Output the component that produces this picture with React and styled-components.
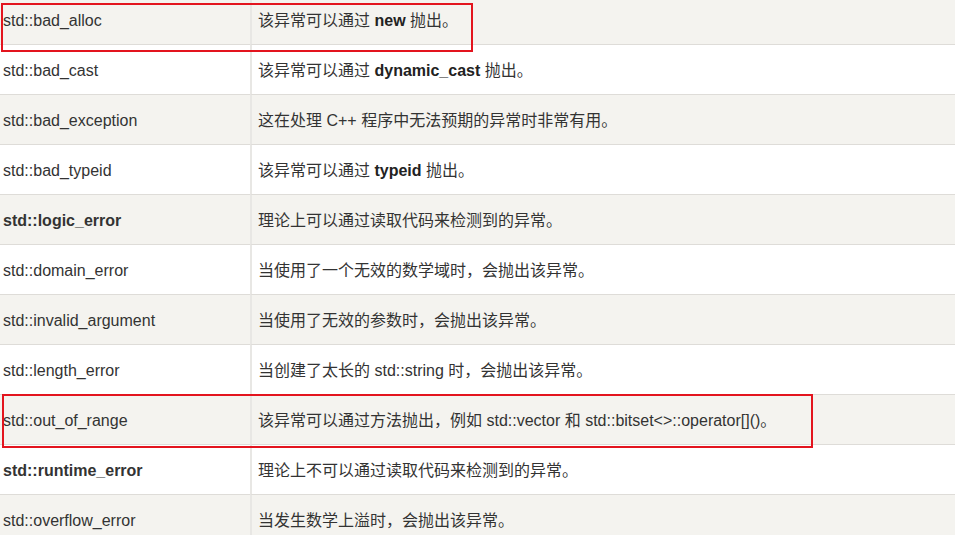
import React from "react";
import styled, { createGlobalStyle } from "styled-components";

const Global = createGlobalStyle`
  html, body { margin: 0; padding: 0; background: #ffffff; overflow: hidden; }
  body { font-family: "Liberation Sans", Arial, "Noto Sans CJK SC", sans-serif; }
`;

const Page = styled.div`
  position: relative;
  width: 955px;
  height: 535px;
  overflow: hidden;
`;

const Table = styled.div`
  display: grid;
  grid-template-columns: 250px 1fr;
  margin-top: -5px;
  width: 980px;
`;

const Cell = styled.div`
  height: 50px;
  display: flex;
  align-items: center;
  box-sizing: border-box;
  padding-top: 2px;
  border-bottom: 1px solid #dedcd8;
  background: ${(p) => (p.$shade ? "#f4f3ef" : "#ffffff")};
  color: #333333;
  font-size: 16px;
  line-height: 20px;
  font-weight: ${(p) => (p.$bold ? 700 : 400)};
  padding-left: ${(p) => (p.$desc ? "6px" : "3px")};
  border-left: ${(p) => (p.$desc ? "2px solid #e8e7e4" : "none")};
  white-space: pre;
  font-family: "Liberation Sans", Arial, "Noto Sans CJK SC", sans-serif;
`;

const Text = styled.span`
  white-space: pre;
  line-height: 20px;
`;

const Strong = styled.b`
  font-weight: 700;
  color: #222;
`;

const Highlight = styled.div`
  position: absolute;
  border: 2px solid #e3141e;
  left: ${(p) => p.$x}px;
  top: ${(p) => p.$y}px;
  width: ${(p) => p.$w}px;
  height: ${(p) => p.$h}px;
  box-sizing: border-box;
  pointer-events: none;
`;

const rows = [
  { name: "std::bad_alloc", desc: <>该异常可以通过 <Strong>new</Strong> 抛出。</> },
  { name: "std::bad_cast", desc: <>该异常可以通过 <Strong>dynamic_cast</Strong> 抛出。</> },
  { name: "std::bad_exception", desc: "这在处理 C++ 程序中无法预期的异常时非常有用。" },
  { name: "std::bad_typeid", desc: <>该异常可以通过 <Strong>typeid</Strong> 抛出。</> },
  { name: "std::logic_error", bold: true, desc: "理论上可以通过读取代码来检测到的异常。" },
  { name: "std::domain_error", desc: "当使用了一个无效的数学域时，会抛出该异常。" },
  { name: "std::invalid_argument", desc: "当使用了无效的参数时，会抛出该异常。" },
  { name: "std::length_error", desc: "当创建了太长的 std::string 时，会抛出该异常。" },
  { name: "std::out_of_range", desc: "该异常可以通过方法抛出，例如 std::vector 和 std::bitset<>::operator[]()。" },
  { name: "std::runtime_error", bold: true, desc: "理论上不可以通过读取代码来检测到的异常。" },
  { name: "std::overflow_error", desc: "当发生数学上溢时，会抛出该异常。" },
];

export default function App() {
  return (
    <>
      <Global />
      <Page>
        <Table>
          {rows.map((r, i) => (
            <React.Fragment key={r.name}>
              <Cell $shade={i % 2 === 0} $bold={r.bold}><Text>{r.name}</Text></Cell>
              <Cell $shade={i % 2 === 0} $desc><Text>{r.desc}</Text></Cell>
            </React.Fragment>
          ))}
        </Table>
        <Highlight $x={1} $y={3} $w={472} $h={49} />
        <Highlight $x={2} $y={394} $w={811} $h={54} />
      </Page>
    </>
  );
}
